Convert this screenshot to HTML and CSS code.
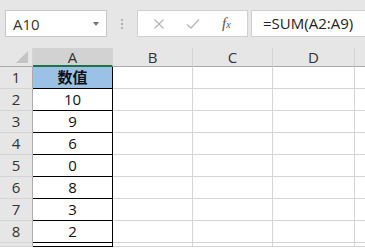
FILE: index.html
```html
<!DOCTYPE html>
<html lang="zh">
<head>
    <meta charset="UTF-8">
    <title>Sheet</title>
    <link rel="stylesheet" href="styles.css">
</head>
<body>
    <div class="toolbar">
        <div class="name-box">
            <span>A10</span>
            <span class="arrow"></span>
        </div>
        <div class="dots"><i></i><i></i><i></i></div>
        <div class="fx-box">
            <svg width="12" height="12" viewBox="0 0 12 12" class="icon">
                <path d="M1.5 1.5 L10.5 10.5 M10.5 1.5 L1.5 10.5" stroke="#b8b8b8" stroke-width="1.3" fill="none"/>
            </svg>
            <svg width="14" height="12" viewBox="0 0 14 12" class="icon">
                <path d="M1 6.5 L5 10 L13 1.5" stroke="#b8b8b8" stroke-width="1.4" fill="none"/>
            </svg>
            <span class="fx"><i>f</i><small>x</small></span>
        </div>
        <div class="formula">=SUM(A2:A9)</div>
    </div>

    <div class="sheet">
        <div class="corner"><span class="tri"></span></div>
        <div class="col-head selected">A</div>
        <div class="col-head">B</div>
        <div class="col-head">C</div>
        <div class="col-head">D</div>
        <div class="col-head"></div>

        <div class="row-head">1</div>
        <div class="cell data title">数值</div>
        <div class="cell"></div><div class="cell"></div><div class="cell"></div><div class="cell"></div>

        <div class="row-head">2</div>
        <div class="cell data">10</div>
        <div class="cell"></div><div class="cell"></div><div class="cell"></div><div class="cell"></div>

        <div class="row-head">3</div>
        <div class="cell data">9</div>
        <div class="cell"></div><div class="cell"></div><div class="cell"></div><div class="cell"></div>

        <div class="row-head">4</div>
        <div class="cell data">6</div>
        <div class="cell"></div><div class="cell"></div><div class="cell"></div><div class="cell"></div>

        <div class="row-head">5</div>
        <div class="cell data">0</div>
        <div class="cell"></div><div class="cell"></div><div class="cell"></div><div class="cell"></div>

        <div class="row-head">6</div>
        <div class="cell data">8</div>
        <div class="cell"></div><div class="cell"></div><div class="cell"></div><div class="cell"></div>

        <div class="row-head">7</div>
        <div class="cell data">3</div>
        <div class="cell"></div><div class="cell"></div><div class="cell"></div><div class="cell"></div>

        <div class="row-head">8</div>
        <div class="cell data">2</div>
        <div class="cell"></div><div class="cell"></div><div class="cell"></div><div class="cell"></div>

        <!-- row 9 only shows its top edge in the frame -->
        <div class="row-head"></div>
        <div class="cell data"></div>
        <div class="cell"></div><div class="cell"></div><div class="cell"></div><div class="cell"></div>
    </div>
</body>
</html>
```

FILE: styles.css
```css
* {
    margin: 0;
    padding: 0;
    box-sizing: border-box;
}

body {
    width: 365px;
    height: 248px;
    overflow: hidden;
    background: #ffffff;
    font-family: "Open Sans", "Noto Sans CJK SC", sans-serif;
    color: #222;
}

.toolbar {
    height: 48px;
    background: #e6e6e6;
    display: flex;
    align-items: flex-start;
    padding-top: 10px;
    padding-left: 5px;
    white-space: nowrap;
}

.name-box {
    width: 102px;
    height: 27px;
    background: #fff;
    border: 1px solid #c8c8c8;
    display: flex;
    align-items: center;
    justify-content: space-between;
    padding: 0 7px 0 7px;
    font-size: 15px;
    color: #333;
}

.name-box .arrow {
    width: 0;
    height: 0;
    border-left: 3px solid transparent;
    border-right: 3px solid transparent;
    border-top: 4px solid #777;
}

.dots {
    width: 30px;
    height: 27px;
    display: flex;
    flex-direction: column;
    align-items: center;
    justify-content: center;
    gap: 2px;
}

.dots i {
    width: 2px;
    height: 2px;
    background: #b0b0b0;
}

.fx-box {
    width: 111px;
    height: 27px;
    background: #fff;
    border: 1px solid #d0d0d0;
    display: flex;
    align-items: center;
    padding-left: 15px;
    gap: 21px;
}

.fx {
    font-family: "Liberation Serif", serif;
    font-size: 15px;
    color: #555;
    margin-left: 1px;
}

.fx small {
    font-size: 10px;
    font-style: italic;
}

.formula {
    flex: 1;
    height: 27px;
    margin-left: 3px;
    background: #fff;
    border: 1px solid #d0d0d0;
    border-right: none;
    padding-left: 11px;
    font-size: 15px;
    line-height: 25px;
    color: #222;
}

.sheet {
    display: grid;
    grid-template-columns: 33px 80px 80px 80px 82px 20px;
    grid-template-rows: 19px repeat(8, 22px) 4px;
    font-size: 15px;
}

.corner {
    background: #e6e6e6;
    border-right: 1px solid #d4d4d4;
    border-bottom: 1px solid #ababab;
    position: relative;
}

.corner .tri {
    position: absolute;
    right: 4px;
    bottom: 3px;
    width: 0;
    height: 0;
    border-left: 12px solid transparent;
    border-bottom: 12px solid #c4c4c4;
}

.col-head {
    background: #e6e6e6;
    border-right: 1px solid #d4d4d4;
    border-bottom: 1px solid #ababab;
    text-align: center;
    line-height: 18px;
    color: #333;
}

.col-head.selected {
    background: #d2d2d2;
    border-bottom: 2px solid #217346;
}

.row-head {
    background: #e6e6e6;
    border-right: 1px solid #ababab;
    border-bottom: 1px solid #d4d4d4;
    text-align: center;
    line-height: 21px;
    color: #333;
}

.cell {
    border-right: 1px solid #d4d4d4;
    border-bottom: 1px solid #d4d4d4;
    line-height: 21px;
}

.cell.data {
    border-right: 1px solid #000;
    border-bottom: 1px solid #000;
    text-align: center;
    color: #111;
}

.cell.title {
    background: #9bc2e6;
    font-weight: bold;
}
```
